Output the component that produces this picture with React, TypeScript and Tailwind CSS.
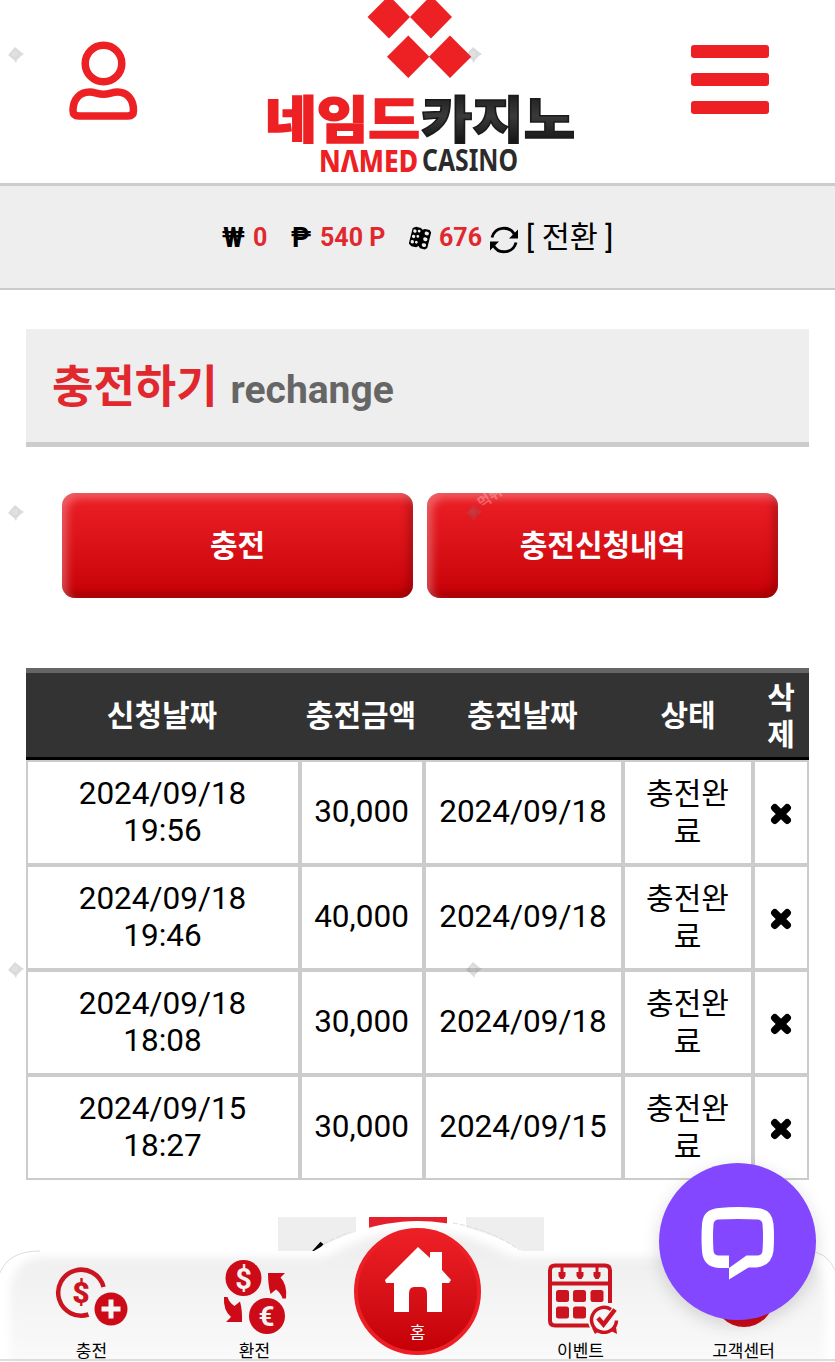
import type { ReactNode } from 'react'

const rows = [
  { date: '2024/09/18', time: '19:56', amount: '30,000', done: '2024/09/18' },
  { date: '2024/09/18', time: '19:46', amount: '40,000', done: '2024/09/18' },
  { date: '2024/09/18', time: '18:08', amount: '30,000', done: '2024/09/18' },
  { date: '2024/09/15', time: '18:27', amount: '30,000', done: '2024/09/15' },
]

const marks = [
  'left-[6px] top-[45px]',
  'left-[464px] top-[45px]',
  'left-[6px] top-[503px]',
  'left-[464px] top-[503px]',
  'left-[6px] top-[960px]',
  'left-[464px] top-[960px]',
]

function Logo() {
  return (
    <svg width="320" height="183" viewBox="260 0 320 183" className="block">
      <defs>
        <linearGradient id="ink" x1="0" y1="0" x2="0" y2="1">
          <stop offset="0" stopColor="#0d0d0d" />
          <stop offset="0.5" stopColor="#3a3a3a" />
          <stop offset="1" stopColor="#080808" />
        </linearGradient>
      </defs>
      <g fill="#ed2024">
        <path d="M389 -4.500l21 21.500-21 21.500-21.500-21.500z" />
        <path d="M431 -4.500l21 21.500-21 21.500-21-21.500z" />
        <path d="M408.300 35.500l21 21.300-21 21.300-21.300-21.300z" />
        <path d="M450 35.500l21.300 21.300-21.300 21.300-21-21.300z" />
      </g>
      <g fontFamily="'Noto Sans CJK KR', sans-serif" fontWeight="900" fontSize="50" strokeWidth="1.500">
        <text x="265" y="138" textLength="155" lengthAdjust="spacingAndGlyphs" fill="#ed2024" stroke="#ed2024">네임드</text>
        <text x="421" y="138" textLength="154" lengthAdjust="spacingAndGlyphs" fill="url(#ink)" stroke="#1a1a1a">카지노</text>
      </g>
      <g fontFamily="'Noto Sans', sans-serif" fontWeight="800" fontSize="29.500">
        <text x="319" y="171.500" textLength="99" lengthAdjust="spacingAndGlyphs" fill="#ed2024">NΛMED</text>
        <text x="422" y="171" textLength="96" lengthAdjust="spacingAndGlyphs" fill="#2b2b2b" fontWeight="700">CASINO</text>
      </g>
    </svg>
  )
}

function UserIcon() {
  return (
    <svg width="70" height="80" viewBox="68 41 70 80" fill="none" stroke="#ed2024" strokeWidth="7.500">
      <circle cx="103.500" cy="63.500" r="18.300" />
      <path d="M79 116h49q5.500 0 5.500-5.500C133.500 99 127 92 117.500 92c-5.500 0-8 2.300-14 2.300S95 92 89.500 92C80 92 73 99 73 110.500q0 5.500 6 5.500z" strokeLinejoin="round" />
    </svg>
  )
}

function DiceIcon() {
  return (
    <svg width="23" height="24" viewBox="0 0 23 24">
      <g transform="rotate(14 11 12)">
        <path d="M1.500 4l3-2h5l2 1.500 2-1.500h5l2 2v16l-2 2h-5l-2-2-2 2h-5l-3-2z" />
        <g fill="#eee">
          <circle cx="4.400" cy="6.500" r="1.700" />
          <circle cx="4.400" cy="12" r="1.700" />
          <circle cx="4.400" cy="17.500" r="1.700" />
          <circle cx="8.500" cy="5.500" r="1.400" />
          <circle cx="8.500" cy="11" r="1.400" />
          <circle cx="8.500" cy="17" r="1.400" />
          <ellipse cx="16.500" cy="6" rx="2.200" ry="1.900" />
          <ellipse cx="16.500" cy="12" rx="2.200" ry="1.900" />
          <ellipse cx="16.500" cy="18" rx="2.200" ry="1.900" />
        </g>
      </g>
    </svg>
  )
}

function SyncIcon() {
  return (
    <svg width="28" height="28" viewBox="0 0 28 28">
      <path d="M2 11.500A12.200 12.200 0 0 1 24.500 8.500M26 16.500A12.200 12.200 0 0 1 3.500 19.500" fill="none" stroke="#000" strokeWidth="2.900" />
      <path d="M28 3.500v9h-9zM0 24.500v-9h9z" />
    </svg>
  )
}

function ChargeIcon() {
  return (
    <svg width="74" height="72" viewBox="55 1262 74 72" className="block">
      <path d="M103.500 1287a23 23 0 1 0-15 27.500" fill="none" stroke="#cc1420" strokeWidth="4.500" />
      <text x="81" y="1303" textAnchor="middle" fontFamily="Roboto, sans-serif" fontWeight="900" fontSize="30" fill="#cc1420">$</text>
      <circle cx="111" cy="1309" r="16.500" fill="#cc0a18" />
      <path d="M111 1299.500v19M101.500 1309h19" stroke="#f6f6f6" strokeWidth="5" />
    </svg>
  )
}

function ExchangeIcon() {
  return (
    <svg width="66" height="76" viewBox="222 1259 66 76" className="block">
      <g fill="#cc0a18">
        <circle cx="243.500" cy="1278" r="18" />
        <circle cx="267" cy="1316" r="18" />
        <path d="M268 1273h17l-4.500 4.500q7 7 5.500 21h-3.500q-2-6-6.500-9l-5.500 4.500q-2.500-9-2.500-21z" />
        <path d="M242 1322h-16l5-5q-8-7-7-20h3.500q2 6 7 9l5.500-4.500q2.500 9 2 20.500z" />
      </g>
      <g fontFamily="Roboto, sans-serif" fontWeight="700" fill="#f6f0f0" textAnchor="middle">
        <text x="243.500" y="1288.500" fontSize="29">$</text>
        <text x="266.500" y="1326" fontSize="28">€</text>
      </g>
    </svg>
  )
}

function CalendarIcon() {
  return (
    <svg width="72" height="72" viewBox="547 1262 72 72" className="block">
      <path d="M590 1325.500h-35q-5 0-5-5v-50q0-5 5-5h50q5 0 5 5V1303M550 1283.500h60" fill="none" stroke="#cc1420" strokeWidth="4" />
      <g fill="#cc1420">
        <path d="M560.500 1266h3v6h2v4l-2 3h-3l-2-3v-4h2zM578.500 1266h3v6h2v4l-2 3h-3l-2-3v-4h2zM595.500 1266h3v6h2v4l-2 3h-3l-2-3v-4h2z" />
        <rect x="556" y="1290" width="13" height="12" rx="2.500" />
        <rect x="573" y="1290" width="13" height="12" rx="2.500" />
        <rect x="590.500" y="1290" width="13" height="12" rx="2.500" />
        <rect x="556" y="1306.500" width="13" height="12" rx="2.500" />
        <rect x="573" y="1306.500" width="13" height="12" rx="2.500" />
      </g>
      <circle cx="604" cy="1320" r="16" fill="#f6f6f6" />
      <path d="M611 1309.500a12.500 12.500 0 1 0 5.500 11" fill="none" stroke="#cc1420" strokeWidth="3.500" />
      <path d="M598 1318l5.500 6.500 11.500-15" fill="none" stroke="#cc1420" strokeWidth="4.500" />
      <path d="M592 1328l3 6 4-3zM611 1331l6 3-1-7z" fill="#cc1420" />
    </svg>
  )
}

function NavItem({ label, children }: { label: string; children?: ReactNode }) {
  return (
    <div className="flex w-[163px] flex-col items-center justify-end">
      {children}
      <span className="h-[20px] text-[17px] leading-[18px]">{label}</span>
    </div>
  )
}

// Grey backdrop of the bottom bar with the raised middle around the home button
function NavBackdrop() {
  return (
    <svg width="835" height="142" viewBox="0 1220 835 142" className="absolute inset-0">
      <defs>
        <linearGradient id="bar" x1="0" y1="0" x2="0" y2="1">
          <stop offset="0" stopColor="#ededed" />
          <stop offset="1" stopColor="#fbfbfb" />
        </linearGradient>
        <filter id="soft" x="-5%" y="-20%" width="110%" height="140%">
          <feGaussianBlur stdDeviation="4" />
        </filter>
      </defs>
      <path d="M0 1362V1272Q8 1251 40 1251H314C335 1238 375 1221 418 1221S503 1238 522 1251H795Q827 1251 835 1272V1362z" fill="#fff" />
      <path d="M10 1372V1290Q14 1257 45 1257H325C350 1246 370 1231 418 1231S490 1246 512 1257H790Q821 1257 825 1290V1372z" fill="url(#bar)" filter="url(#soft)" />
      <path d="M0 1273Q8 1251 40 1251M835 1270Q827 1251 806 1251" fill="none" stroke="#ddd" />
      <path d="M453 1223Q492 1230 519 1250M323 1244Q337 1237 350 1232" fill="none" stroke="#ddd" strokeDasharray="5 2" />
      <path d="M0 1360h835" stroke="#ddd" strokeWidth="2" />
    </svg>
  )
}

const button =
  'flex h-[105px] w-[351px] items-center justify-center rounded-[13px] bg-gradient-to-b from-[#ed1f26] to-[#c70005] text-[30px] font-bold text-white shadow-[inset_5px_5px_8px_rgba(255,255,255,0.3),inset_-4px_-4px_8px_rgba(90,0,0,0.4)]'
const cell = 'flex items-center justify-center border-2 border-[#ccc] pr-px text-center'

export default function App() {
  return (
    <div className="relative flex h-[1362px] w-[835px] flex-col overflow-hidden bg-white font-[Roboto,'Noto_Sans_CJK_KR',sans-serif] text-black">
      <header className="flex h-[186px] shrink-0 border-b-[3px] border-[#ccc] pl-[68px]">
        <div className="w-[192px] pt-[41px]">
          <UserIcon />
        </div>
        <div className="w-[431px]">
          <Logo />
        </div>
        <div className="flex w-[78px] flex-col gap-[15px] pt-[45px]">
          <div className="h-[13px] rounded-[3px] bg-[#ed2024]" />
          <div className="h-[13px] rounded-[3px] bg-[#ed2024]" />
          <div className="h-[13px] rounded-[3px] bg-[#ed2024]" />
        </div>
      </header>

      <div className="flex h-[104px] shrink-0 items-center border-b-2 border-[#ccc] bg-[#eee] pt-[2px] pl-[222px] text-[25px] font-bold whitespace-nowrap text-[#e0282e]">
        <span className="w-[31px] text-[28px] text-black">₩</span>
        <span className="w-[38px]">0</span>
        <span className="w-[29px] text-[27px] text-black">₱</span>
        <span className="w-[89px]">540 P</span>
        <span className="w-[30px] text-black"><DiceIcon /></span>
        <span className="w-[51px]">676</span>
        <span className="w-[36px] pt-[3px] text-black"><SyncIcon /></span>
        <span className="text-[30.500px] font-normal text-black">[ 전환 ]</span>
      </div>

      <main className="flex flex-col px-[26px] pt-[39px]">
        <h1 className="flex h-[118px] items-baseline gap-[13px] border-b-[5px] border-[#ccc] bg-[#eee] pt-[26px] pl-[26px] font-bold">
          <span className="text-[45px] leading-[66px] text-[#e0282e]">충전하기</span>
          <span className="text-[39px] leading-[66px] text-[#666]">rechange</span>
        </h1>

        <div className="mt-[46px] flex gap-[14px] pl-[36px]">
          <button className={button}>충전</button>
          <button className={button}>충전신청내역</button>
        </div>

        <div className="mt-[70px] flex flex-col">
          <div className="grid h-[92px] grid-cols-[274px_124px_199px_130px_56px] items-center border-t-[5px] border-b-[3px] border-t-[#666] border-b-black bg-[#333] pt-[2px] text-center text-[30px] leading-[37.500px] font-bold text-white">
            <span className="pr-[2px]">신청날짜</span>
            <span className="pr-[2px]">충전금액</span>
            <span className="pr-[2px]">충전날짜</span>
            <span>상태</span>
            <span className="px-3">삭<br />제</span>
          </div>
          {rows.map((row) => (
            <div key={row.time} className="grid h-[105px] grid-cols-[274px_124px_199px_130px_56px] text-[31.500px] leading-[37.500px]">
              <div className={`${cell} pb-px`}>{row.date}<br />{row.time}</div>
              <div className={`${cell} pb-px`}>{row.amount}</div>
              <div className={`${cell} pb-px`}>{row.done}</div>
              <div className={`${cell} text-[30px]`}>충전완<br />료</div>
              <div className={cell}>
                <svg width="22" height="22" viewBox="0 0 22 22" className="mt-[3px]">
                  <path d="M4.800 4.800l12.400 12.400M17.200 4.800L4.800 17.200" stroke="#000" strokeWidth="7.500" strokeLinecap="round" />
                </svg>
              </div>
            </div>
          ))}
        </div>

        <div className="mt-[37px] flex h-[50px] pl-[252px]">
          <div className="flex w-[78px] justify-center bg-[#eee] pt-[24px]">
            <svg width="14" height="24" viewBox="0 0 14 24" fill="none" stroke="#000" strokeWidth="4">
              <path d="M12 2L3 12l9 10" />
            </svg>
          </div>
          <div className="ml-[13px] w-[78px] bg-[#e3202b]" />
          <div className="ml-[19px] w-[78px] bg-[#eee]" />
        </div>
      </main>

      <nav className="absolute bottom-0 left-0 h-[142px] w-[835px]">
        <NavBackdrop />
        <div className="relative flex h-full px-[10px]">
          <NavItem label="충전">
            <div className="mb-[8px]"><ChargeIcon /></div>
          </NavItem>
          <NavItem label="환전">
            <div className="mb-[7px]"><ExchangeIcon /></div>
          </NavItem>
          <div className="flex w-[163px] justify-center pt-[8px]">
            <div className="flex h-[127px] w-[127px] shrink-0 flex-col items-center rounded-full border-4 border-[#ed1f26] bg-gradient-to-b from-[#ed1f26] to-[#c40006] pt-[15px] text-white">
              <svg width="66" height="66" viewBox="0 0 66 66" fill="#fff">
                <path d="M33 0l12 11V5h12v18l9 10-2 3h-7v29H42V47q0-7-5-7h-8q-5 0-5 7v18H9V36H1l-1-3z" />
              </svg>
              <span className="mt-[10px] text-[17px] leading-[20px]">홈</span>
            </div>
          </div>
          <NavItem label="이벤트">
            <div className="mb-[8px] pl-[4px]"><CalendarIcon /></div>
          </NavItem>
          <NavItem label="고객센터">
            <div className="mb-[15px] h-[60px] w-[60px] rounded-full bg-[#cc0a18]" />
          </NavItem>
        </div>
      </nav>

      <div className="absolute top-[1163px] left-[659px] flex h-[157px] w-[157px] items-center justify-center rounded-full bg-[#8247ff] shadow-[0_5px_18px_rgba(0,0,0,0.15)]">
        <svg width="74" height="74" viewBox="0 0 74 74" className="mt-[4px]" fill="#fff">
          <path
            fillRule="evenodd"
            d="M18 1Q37-1 56 1 71 2 72.500 17q1 13 0 27-2 15-17 16.500h-8L28 72.500V61H18Q2 60 1 44 0 31 1 17 2 2 18 1zM17 12.500q-4 .5-4.500 4.500-1 13 0 27 .5 4 4.500 4.500h11V61l17.500-12.500H57q4-.5 4.500-4.500 1-14 0-27-.5-4-4.500-4.500-20-1-40 0z"
          />
        </svg>
      </div>

      {marks.map((pos) => (
        <svg key={pos} width="20" height="20" viewBox="0 0 20 20" className={`absolute opacity-25 ${pos}`}>
          <path d="M9 2l6 5 3 2-3 2-4 4-1 3-2-3-6-5z" fill="#777" />
          <circle cx="9" cy="9" r="4" fill="#888" stroke="#666" />
        </svg>
      ))}
      <span className="absolute top-[487px] left-[477px] -rotate-35 text-[14px] font-bold text-white/30">먹튀</span>
    </div>
  )
}
